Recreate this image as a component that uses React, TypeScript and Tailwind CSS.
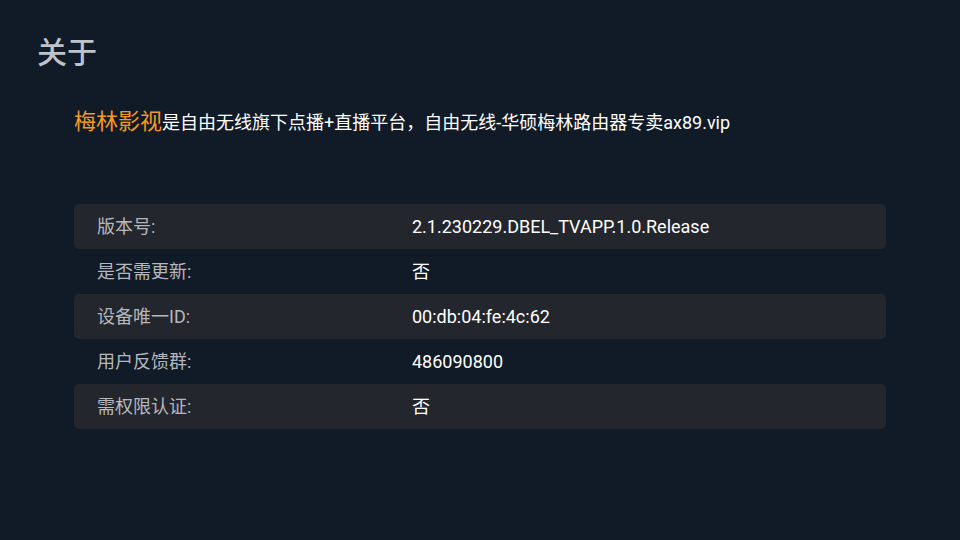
import React from 'react';

const rows = [
    { label: '版本号:', value: '2.1.230229.DBEL_TVAPP.1.0.Release' },
    { label: '是否需更新:', value: '否' },
    { label: '设备唯一ID:', value: '00:db:04:fe:4c:62' },
    { label: '用户反馈群:', value: '486090800' },
    { label: '需权限认证:', value: '否' },
];

export default function App() {
    return (
        <div
            className="h-[540px] w-[960px] overflow-hidden bg-[#111a27]"
            style={{ fontFamily: 'Roboto, "Noto Sans CJK SC", sans-serif' }}
        >
            <h1 className="pl-[37px] pt-[33px] text-[30px] font-medium leading-[40px] text-[#bfc3c9]">关于</h1>

            <p className="mt-[34px] pl-[74px] text-[18px] leading-[30px] text-white">
                <span className="text-[22px] text-[#f39a22]">梅林影视</span>
                是自由无线旗下点播+直播平台，自由无线-华硕梅林路由器专卖ax89.vip
            </p>

            <div className="mx-[74px] mt-[66px] flex flex-col">
                {rows.map((row, i) => (
                    <div
                        key={row.label}
                        className={`flex h-[45px] items-center rounded-[5px] text-[18px] ${
                            i % 2 === 0 ? 'bg-[#23262c]' : ''
                        }`}
                    >
                        <span className="w-[338px] pl-[23px] text-[#b4b8be]">{row.label}</span>
                        <span className="text-white">{row.value}</span>
                    </div>
                ))}
            </div>
        </div>
    );
}
